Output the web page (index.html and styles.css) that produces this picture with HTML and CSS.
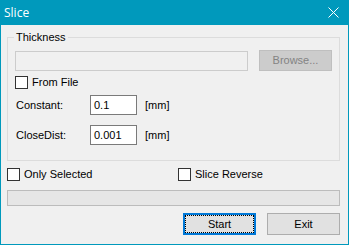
FILE: index.html
```html
<!DOCTYPE html>
<html>
<head>
<meta charset="utf-8">
<link rel="stylesheet" href="styles.css">
</head>
<body>
<div class="window">
  <div class="titlebar">
    <span class="title">Slice</span>
    <svg class="close" width="11" height="11" viewBox="0 0 11 11">
      <path d="M0.5 0.5 L10.5 10.5 M10.5 0.5 L0.5 10.5" stroke="#fff" stroke-width="1" fill="none"/>
    </svg>
  </div>
  <div class="group">
    <span class="legend">Thickness</span>
    <div class="file-row">
      <div class="field disabled"></div>
      <div class="btn disabled-btn">Browse...</div>
    </div>
    <div class="check-row inset">
      <span class="box"></span><span class="check-label">From File</span>
    </div>
    <div class="param-row first">
      <span class="param-label">Constant:</span>
      <div class="input">0.1</div>
      <span class="unit">[mm]</span>
    </div>
    <div class="param-row second">
      <span class="param-label">CloseDist:</span>
      <div class="input">0.001</div>
      <span class="unit">[mm]</span>
    </div>
  </div>
  <div class="options">
    <div class="check-row opt-left">
      <span class="box"></span><span class="check-label">Only Selected</span>
    </div>
    <div class="check-row">
      <span class="box"></span><span class="check-label">Slice Reverse</span>
    </div>
  </div>
  <div class="progress"></div>
  <div class="buttons">
    <div class="btn start"><span>Start</span></div>
    <div class="btn exit">Exit</div>
  </div>
</div>
</body>
</html>
```

FILE: styles.css
```css
html, body {
  margin: 0;
  padding: 0;
  background: #f0f0f0;
}
.window {
  width: 349px;
  height: 245px;
  box-sizing: border-box;
  border: 1px solid #0099bc;
  border-top: none;
  background: #f0f0f0;
  font-family: "Liberation Sans", Arial, sans-serif;
  font-size: 11px;
  color: #000;
  overflow: hidden;
}
.titlebar {
  height: 25px;
  background: #0099bc;
  display: flex;
  align-items: center;
  padding-left: 3px;
}
.title {
  font-family: "Open Sans", "Noto Sans", sans-serif;
  font-size: 12px;
  line-height: 25px;
  color: #fff;
}
.close {
  margin-left: auto;
  margin-right: 9px;
  display: block;
}
.group {
  margin: 12px 8px 0 6px;
  border: 1px solid #dcdcdc;
  padding-bottom: 15px;
}
.legend {
  display: block;
  width: fit-content;
  margin: -7px 0 0 6px;
  padding: 0 2px;
  background: #f0f0f0;
  line-height: 13px;
}
.file-row {
  display: flex;
  align-items: flex-start;
  margin-top: 6px;
  padding-left: 7px;
}
.field {
  box-sizing: border-box;
  width: 233px;
  height: 20px;
  margin-top: 1px;
}
.field.disabled {
  border: 1px solid #cccccc;
  background: #f0f0f0;
}
.btn {
  box-sizing: border-box;
  width: 73px;
  height: 22px;
  display: flex;
  align-items: center;
  justify-content: center;
  background: #e1e1e1;
  border: 1px solid #adadad;
  line-height: 13px;
}
.disabled-btn {
  height: 21px;
  margin-left: 11px;
  background: #cccccc;
  border-color: #bfbfbf;
  color: #838383;
}
.check-row {
  display: flex;
  align-items: center;
  height: 13px;
  line-height: 13px;
}
.check-row.inset {
  margin-top: 5px;
  padding-left: 7px;
}
.box {
  box-sizing: border-box;
  width: 13px;
  height: 13px;
  border: 1px solid #333333;
  background: #ffffff;
  flex: none;
}
.check-label {
  margin-left: 4px;
}
.param-row {
  display: flex;
  align-items: center;
  padding-left: 8px;
}
.param-row.first {
  margin-top: 6px;
}
.param-row.second {
  margin-top: 10px;
}
.param-label {
  width: 74px;
}
.input {
  box-sizing: border-box;
  width: 47px;
  height: 20px;
  border: 1px solid #7a7a7a;
  background: #ffffff;
  padding-left: 3px;
  line-height: 18px;
}
.unit {
  margin-left: 8px;
}
.options {
  display: flex;
  margin: 7px 0 0 6px;
}
.opt-left {
  width: 171px;
}
.progress {
  box-sizing: border-box;
  width: 333px;
  height: 16px;
  margin: 9px 0 0 6px;
  border: 1px solid #bcbcbc;
  background: #e6e6e6;
}
.buttons {
  display: flex;
  justify-content: flex-end;
  gap: 11px;
  margin: 7px 8px 0 0;
}
.start {
  border: 2px solid #0078d7;
  outline: 1px dotted #000;
  outline-offset: -3px;
}
```
